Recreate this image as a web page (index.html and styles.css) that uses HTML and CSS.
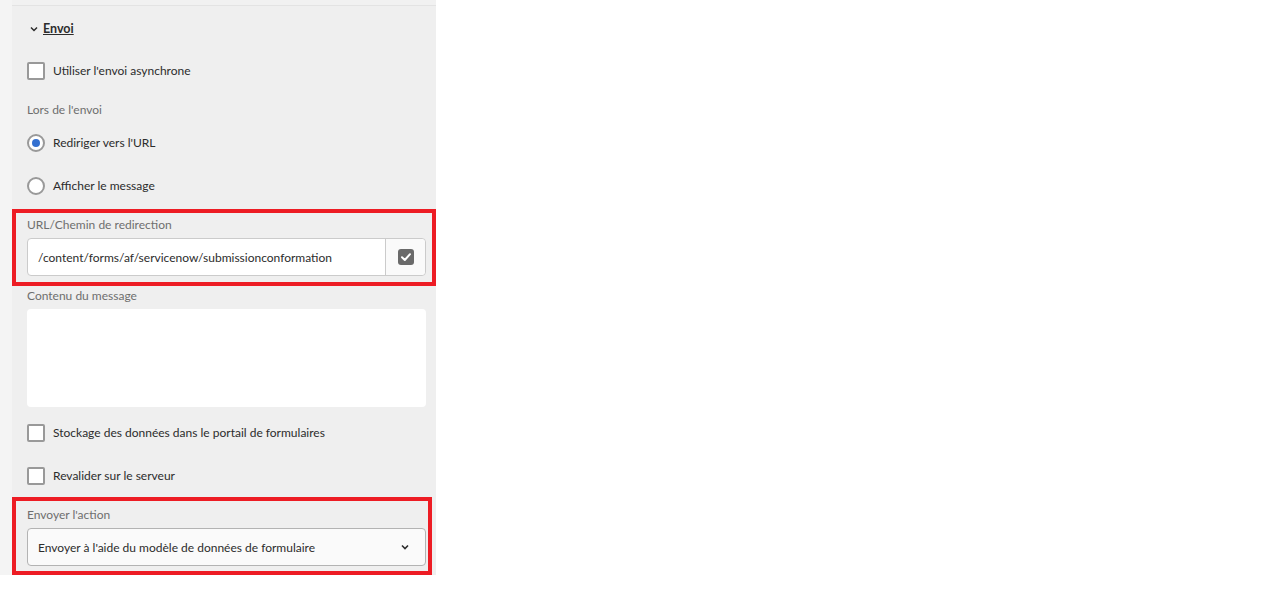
FILE: index.html
```
<!DOCTYPE html>
<html lang="fr">
<head>
    <meta charset="UTF-8">
    <meta name="viewport" content="width=device-width, initial-scale=1.0">
    <title>Envoi</title>
    <link rel="stylesheet" href="styles.css">
</head>
<body>

    <div class="sidebar">
        <div class="panel">
            <div class="panel-top"></div>

            <!-- Section header -->
            <div class="section-head">
                <svg class="chevron" width="8" height="6" viewBox="0 0 8 6">
                    <path d="M1 1.5 L4 4.5 L7 1.5" fill="none" stroke="#2c2c2c" stroke-width="1.5"/>
                </svg>
                <span class="section-title">Envoi</span>
            </div>

            <label class="check-row first">
                <span class="checkbox"></span>
                <span>Utiliser l'envoi asynchrone</span>
            </label>

            <div class="field-label label-submit">Lors de l'envoi</div>

            <label class="radio-row first-radio">
                <span class="radio checked"></span>
                <span>Rediriger vers l'URL</span>
            </label>
            <label class="radio-row second-radio">
                <span class="radio"></span>
                <span>Afficher le message</span>
            </label>

            <!-- Redirect path -->
            <div class="highlight highlight-url">
                <div class="field-label">URL/Chemin de redirection</div>
                <div class="path-input">
                    <span class="path-text">/content/forms/af/servicenow/submissionconformation</span>
                    <span class="path-btn">
                        <svg width="16" height="16" viewBox="0 0 16 16">
                            <rect x="0" y="0" width="16" height="16" rx="3" fill="#6a6a6a"/>
                            <path d="M4 8.3 L6.8 11 L12 5.2" fill="none" stroke="#fff" stroke-width="2" stroke-linecap="round" stroke-linejoin="round"/>
                        </svg>
                    </span>
                </div>
            </div>

            <div class="field-label label-message">Contenu du message</div>
            <div class="message-box"></div>

            <label class="check-row storage">
                <span class="checkbox"></span>
                <span>Stockage des données dans le portail de formulaires</span>
            </label>
            <label class="check-row revalidate">
                <span class="checkbox"></span>
                <span>Revalider sur le serveur</span>
            </label>

            <!-- Submit action -->
            <div class="highlight highlight-action">
                <div class="field-label">Envoyer l'action</div>
                <div class="select">
                    <span>Envoyer à l'aide du modèle de données de formulaire</span>
                    <svg width="8" height="6" viewBox="0 0 8 6">
                        <path d="M1 1.5 L4 4.5 L7 1.5" fill="none" stroke="#2c2c2c" stroke-width="1.6"/>
                    </svg>
                </div>
            </div>
        </div>
    </div>

</body>
</html>
```

FILE: styles.css
```
* {
    box-sizing: border-box;
    font-family: 'Lato', 'Liberation Sans', sans-serif;
}
body {
    margin: 0;
    background: #ffffff;
    color: #2c2c2c;
    font-size: 12px;
}
.sidebar {
    width: 436px;
    padding-left: 12px;
    background: #f4f4f4;
}
.panel {
    width: 424px;
    height: 575px;
    background: #efefef;
}
.panel-top {
    height: 6px;
    background: #f1f1f1;
    border-bottom: 1px solid #e3e3e3;
}
.section-head {
    height: 46px;
    display: flex;
    align-items: center;
    padding-left: 18px;
}
.chevron {
    margin-right: 5px;
}
.section-title {
    font-weight: bold;
    font-size: 12.5px;
    text-decoration: underline;
    line-height: 16px;
}
.check-row, .radio-row {
    display: flex;
    align-items: center;
    height: 18px;
    margin-left: 15px;
    line-height: 16px;
}
.check-row.first { margin-top: 10px; }
.check-row.storage { margin-top: 17px; }
.check-row.revalidate { margin-top: 25px; }
.checkbox {
    width: 18px;
    height: 18px;
    border: 2px solid #999999;
    border-radius: 2px;
    background: #ffffff;
    margin-right: 8px;
}
.radio {
    width: 18px;
    height: 18px;
    border: 2px solid #999999;
    border-radius: 50%;
    background: #ffffff;
    margin-right: 8px;
    display: flex;
    align-items: center;
    justify-content: center;
}
.radio.checked::after {
    content: "";
    width: 8px;
    height: 8px;
    border-radius: 50%;
    background: #3470d0;
}
.first-radio { margin-top: 16px; }
.second-radio { margin-top: 25px; }
.field-label {
    color: #6e6e6e;
    line-height: 16px;
    margin-left: 15px;
}
.label-submit { margin-top: 22px; }
.label-message { margin-top: 2px; }
.highlight {
    border: 4px solid #ed1c24;
}
.highlight .field-label {
    margin-left: 11px;
}
.highlight-url {
    width: 424px;
    margin-top: 14px;
    padding-top: 4px;
    padding-bottom: 6px;
}
.highlight-action {
    width: 420px;
    margin-top: 12px;
    padding-top: 6px;
    padding-bottom: 5px;
}
.path-input {
    display: flex;
    width: 399px;
    height: 38px;
    margin: 5px 0 0 11px;
    background: #ffffff;
    border: 1px solid #cbcbcb;
    border-radius: 4px;
}
.path-text {
    flex: 1;
    display: flex;
    align-items: center;
    padding-left: 10px;
}
.path-btn {
    width: 40px;
    display: flex;
    align-items: center;
    justify-content: center;
    border-left: 1px solid #cbcbcb;
    background: #fafafa;
    border-radius: 0 4px 4px 0;
}
.message-box {
    width: 399px;
    height: 98px;
    margin: 5px 0 0 15px;
    background: #ffffff;
    border-radius: 4px;
}
.select {
    display: flex;
    align-items: center;
    justify-content: space-between;
    width: 399px;
    height: 38px;
    margin: 5px 0 0 11px;
    padding: 0 16px 0 10px;
    background: #fafafa;
    border: 1px solid #b3b3b3;
    border-radius: 4px;
}
```
